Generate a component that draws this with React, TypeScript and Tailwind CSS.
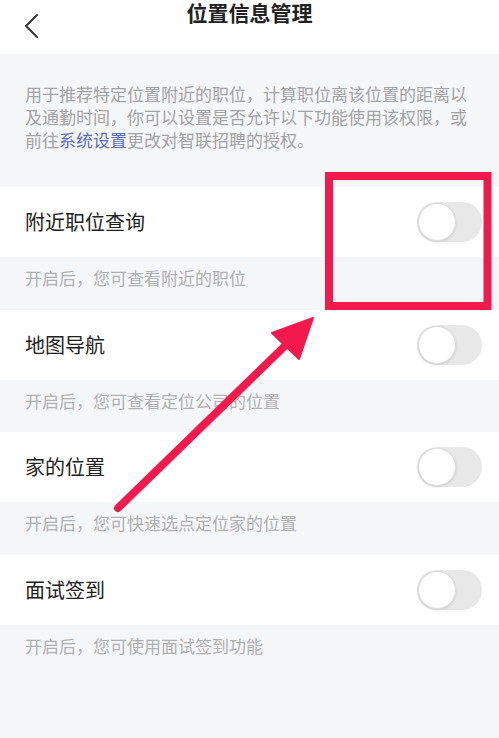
const font = { fontFamily: '"Noto Sans CJK SC", "Noto Sans", sans-serif' };

const items = [
  { label: "附近职位查询", hint: "开启后，您可查看附近的职位" },
  { label: "地图导航", hint: "开启后，您可查看定位公司的位置" },
  { label: "家的位置", hint: "开启后，您可快速选点定位家的位置" },
  { label: "面试签到", hint: "开启后，您可使用面试签到功能" },
];

function Toggle() {
  return (
    <div className="flex h-[40px] w-[65px] items-center rounded-full bg-[#e8e8e8] p-[1px]">
      <div className="h-[38px] w-[38px] rounded-full border border-[#dcdcdc] bg-white shadow-[0_1px_3px_rgba(0,0,0,0.12)]" />
    </div>
  );
}

export default function App() {
  return (
    <div className="relative h-[738px] w-[499px] overflow-hidden bg-[#f5f6f8]" style={font}>
      <header className="relative h-[54px] bg-white">
        <svg className="absolute left-[22px] top-[13px]" width="20" height="26" viewBox="0 0 20 26">
          <path d="M15 2 L4 13 L15 24" fill="none" stroke="#333" strokeWidth="2" strokeLinecap="round" strokeLinejoin="round" />
        </svg>
        <h1 className="text-center text-[21px] font-bold leading-[24px] text-[#222]">位置信息管理</h1>
      </header>

      <div className="h-[133px] px-[25px] pt-[28px] text-[17px] leading-[23px] text-[#a3a3a3]">
        用于推荐特定位置附近的职位，计算职位离该位置的距离以及通勤时间，你可以设置是否允许以下功能使用该权限，或前往
        <span className="text-[#5a6db8]">系统设置</span>
        更改对智联招聘的授权。
      </div>

      {items.map((it) => (
        <div key={it.label}>
          <div className="flex h-[70px] items-center justify-between bg-white pl-[25px] pr-[17px]">
            <span className="text-[20px] text-[#222]">{it.label}</span>
            <Toggle />
          </div>
          <div className="h-[52.7px] px-[25px] pt-[10px] text-[17px] leading-[22px] text-[#b0b0b0]">{it.hint}</div>
        </div>
      ))}

      <svg className="pointer-events-none absolute left-0 top-0" width="499" height="738" viewBox="0 0 499 738">
        <rect x="329" y="176" width="158.5" height="130" fill="none" stroke="#f3194c" strokeWidth="8" />
        <line x1="118" y1="508" x2="290" y2="341" stroke="#f3194c" strokeWidth="8" strokeLinecap="round" />
        <polygon points="313,318 272,333 299,359" fill="#f3194c" stroke="#f3194c" strokeWidth="2" strokeLinejoin="round" />
      </svg>
    </div>
  );
}
